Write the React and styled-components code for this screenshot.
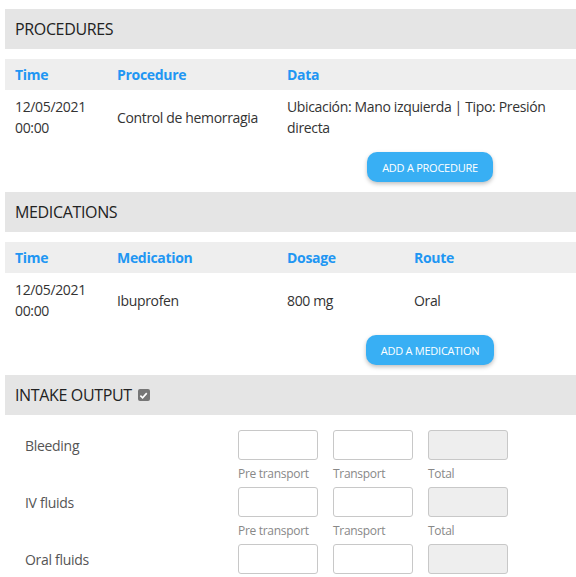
import React from "react";
import styled, { createGlobalStyle } from "styled-components";

const Global = createGlobalStyle`
  html, body { margin: 0; padding: 0; background: #fff; overflow: hidden; }
  body { font-family: "Open Sans", "Noto Sans", sans-serif; color: #333; }
`;

const Page = styled.div`
  padding: 9px 0 0 5px;
`;

const SectionHeader = styled.div`
  display: flex;
  align-items: center;
  gap: 6px;
  height: 40px;
  padding: 0 10px;
  background: #e5e5e5;
  font-size: 16px;
  letter-spacing: -0.35px;
  color: #222;
  text-transform: uppercase;
`;

const Table = styled.table`
  width: 100%;
  margin-top: 10px;
  border-collapse: collapse;
  table-layout: fixed;
`;

const Th = styled.th`
  box-sizing: border-box;
  width: ${(p) => (p.$w ? `${p.$w}px` : "auto")};
  text-align: left;
  padding: 0 10px;
  height: 31px;
  background: #eee;
  color: #2196f3;
  font-size: 14px;
  letter-spacing: -0.3px;
  font-weight: 700;
`;

const Td = styled.td`
  padding: 6px 10px 7px;
  font-size: 14px;
  line-height: 21px;
  letter-spacing: -0.35px;
  color: #333;
  vertical-align: middle;
`;

const ButtonRow = styled.div`
  display: flex;
  justify-content: center;
  padding: 7px 0 10px 279px;
`;

const Button = styled.button`
  height: 30px;
  padding: 0 15px;
  border: none;
  border-radius: 10px;
  background: #38aff4;
  color: #fff;
  font-family: "Open Sans", sans-serif;
  font-size: 11px;
  letter-spacing: -0.25px;
  text-transform: uppercase;
  box-shadow: 0 2px 4px rgba(0, 0, 0, 0.25);
  cursor: pointer;
`;

const CheckMark = styled.span`
  display: inline-flex;
  align-items: center;
  justify-content: center;
  width: 12px;
  height: 12px;
  border-radius: 2px;
  background: #767676;
`;

const IntakeBody = styled.div`
  display: flex;
  flex-direction: column;
  padding: 15px 0 0 20px;
`;

const IntakeRow = styled.div`
  display: grid;
  grid-template-columns: 198px 80px 80px 80px;
  column-gap: 15px;
`;

const Label = styled.div`
  height: 30px;
  display: flex;
  align-items: center;
  font-size: 14px;
  letter-spacing: -0.3px;
  color: #555;
`;

const Field = styled.div`
  display: flex;
  flex-direction: column;
`;

const Input = styled.input`
  box-sizing: border-box;
  width: 80px;
  height: 30px;
  border: 1px solid #c8c8c8;
  border-radius: 3px;
  background: ${(p) => (p.readOnly ? "#eee" : "#fff")};
  margin: 0;
`;

const Caption = styled.div`
  font-size: 12px;
  line-height: 18px;
  letter-spacing: -0.3px;
  color: #888;
  margin: 5px 0 4px;
`;

const Check = () => (
  <CheckMark>
    <svg width="9" height="9" viewBox="0 0 10 10">
      <path d="M1.5 5.2 L4 7.6 L8.6 2.4" fill="none" stroke="#fff" strokeWidth="1.8" />
    </svg>
  </CheckMark>
);

const intake = [
  { label: "Bleeding", caption: true },
  { label: "IV fluids", caption: true },
  { label: "Oral fluids", caption: false },
];

export default function App() {
  return (
    <Page>
      <Global />
      <SectionHeader>Procedures</SectionHeader>
      <Table>
        <thead>
          <tr>
            <Th $w={102}>Time</Th>
            <Th $w={170}>Procedure</Th>
            <Th>Data</Th>
          </tr>
        </thead>
        <tbody>
          <tr>
            <Td>12/05/2021 00:00</Td>
            <Td>Control de hemorragia</Td>
            <Td>Ubicación: Mano izquierda | Tipo: Presión directa</Td>
          </tr>
        </tbody>
      </Table>
      <ButtonRow>
        <Button>Add a procedure</Button>
      </ButtonRow>

      <SectionHeader>Medications</SectionHeader>
      <Table>
        <thead>
          <tr>
            <Th $w={102}>Time</Th>
            <Th $w={170}>Medication</Th>
            <Th $w={127}>Dosage</Th>
            <Th>Route</Th>
          </tr>
        </thead>
        <tbody>
          <tr>
            <Td>12/05/2021 00:00</Td>
            <Td>Ibuprofen</Td>
            <Td>800 mg</Td>
            <Td>Oral</Td>
          </tr>
        </tbody>
      </Table>
      <ButtonRow>
        <Button>Add a medication</Button>
      </ButtonRow>

      <SectionHeader>
        Intake output <Check />
      </SectionHeader>
      <IntakeBody>
        {intake.map((r) => (
          <IntakeRow key={r.label}>
            <Label>{r.label}</Label>
            <Field>
              <Input />
              {r.caption && <Caption>Pre transport</Caption>}
            </Field>
            <Field>
              <Input />
              {r.caption && <Caption>Transport</Caption>}
            </Field>
            <Field>
              <Input readOnly />
              {r.caption && <Caption>Total</Caption>}
            </Field>
          </IntakeRow>
        ))}
      </IntakeBody>
    </Page>
  );
}
